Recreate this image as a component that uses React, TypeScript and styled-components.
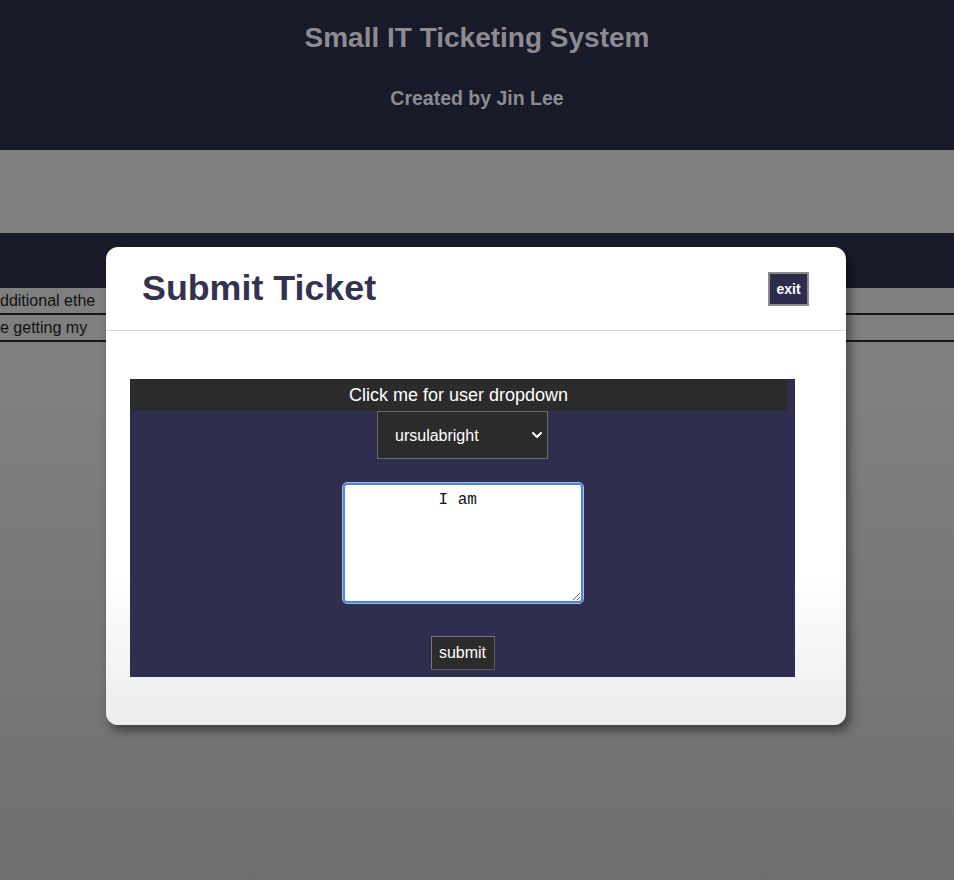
import React from "react";
import styled, { createGlobalStyle } from "styled-components";

const Global = createGlobalStyle`
  html, body { margin: 0; padding: 0; }
  body {
    font-family: "Liberation Sans", Arial, Helvetica, sans-serif;
    background: linear-gradient(to bottom, #818181 0px, #7e7e7e 420px, #6f6f6f 880px);
    min-height: 880px;
    overflow: hidden;
  }
`;

const Page = styled.div`
  position: relative;
  width: 954px;
  height: 880px;
  overflow: hidden;
`;

const Header = styled.header`
  height: 150px;
  background: #181a29;
  display: flex;
  flex-direction: column;
  align-items: center;
  padding-top: 22px;
  box-sizing: border-box;
  color: #8b8b91;
`;

const Title = styled.h1`
  margin: 0;
  font-size: 28px;
  line-height: 32px;
  font-weight: bold;
`;

const Subtitle = styled.h2`
  margin: 32px 0 0;
  font-size: 19.5px;
  line-height: 24px;
  font-weight: bold;
`;

const Spacer = styled.div`
  height: 83px;
`;

const NavBand = styled.div`
  height: 55px;
  background: #181a29;
`;

const Row = styled.div`
  height: 25px;
  border-bottom: 2px solid #161616;
  display: flex;
  align-items: center;
  font-size: 16px;
  color: #111;
  white-space: nowrap;
`;

const Cell = styled.div`
  width: 106px;
  overflow: hidden;
`;

const Modal = styled.div`
  position: absolute;
  top: 247px;
  left: 106px;
  width: 740px;
  height: 478px;
  border-radius: 12px;
  background: linear-gradient(to bottom, #ffffff 0%, #ffffff 68%, #ececec 100%);
  box-shadow: 4px 6px 10px rgba(0, 0, 0, 0.45);
  display: flex;
  flex-direction: column;
`;

const ModalHeader = styled.div`
  height: 84px;
  box-sizing: border-box;
  display: flex;
  align-items: center;
  justify-content: space-between;
  padding: 0 37px 0 36px;
  border-bottom: 1px solid #d8d8d8;
`;

const ModalTitle = styled.h2`
  margin: 0;
  font-size: 35.8px;
  font-weight: bold;
  color: #33324f;
`;

const ExitButton = styled.button`
  width: 41px;
  height: 34px;
  padding: 0;
  background: #2d2c4d;
  color: #fff;
  border: 2px solid #8a8a8a;
  font-family: "Liberation Sans", Arial, sans-serif;
  font-weight: bold;
  font-size: 14px;
  cursor: pointer;
`;

const ModalBody = styled.div`
  padding: 48px 51px 0 24px;
`;

const Form = styled.form`
  height: 298px;
  background: #2f2e4f;
  display: flex;
  flex-direction: column;
  align-items: center;
`;

const FormBar = styled.div`
  align-self: flex-start;
  width: 657px;
  height: 32px;
  background: #2b2b2c;
  color: #fff;
  font-size: 18px;
  display: flex;
  align-items: center;
  justify-content: center;
`;

const SelectWrap = styled.div`
  position: relative;
  width: 171px;
  height: 48px;
`;

const Select = styled.select`
  width: 100%;
  height: 100%;
  appearance: none;
  -webkit-appearance: none;
  background: #2b2b2b;
  color: #fff;
  border: 1px solid #6d6d6d;
  border-radius: 0;
  font-family: "Liberation Sans", Arial, sans-serif;
  font-size: 16px;
  padding: 0 0 0 17px;
  outline: none;
`;

const Chevron = styled.svg`
  position: absolute;
  right: 5px;
  top: 19px;
  pointer-events: none;
`;

const TextArea = styled.textarea`
  margin-top: 24px;
  width: 240px;
  height: 120px;
  box-sizing: border-box;
  border: 2px solid #4f86d8;
  border-radius: 4px;
  outline: 1px solid #9fbce8;
  background: #fff;
  font-family: "Liberation Mono", "Courier New", monospace;
  font-size: 16px;
  text-align: center;
  padding: 6px 2px 2px;
  color: #111;
`;

const SubmitButton = styled.button`
  margin-top: 33px;
  width: 64px;
  height: 34px;
  padding: 0;
  background: #2b2b2b;
  color: #fff;
  border: 1px solid #5c5c5c;
  border-top-color: #777;
  border-left-color: #777;
  font-family: "Liberation Sans", Arial, sans-serif;
  font-size: 16px;
  cursor: pointer;
`;

export default function App() {
  return (
    <Page>
      <Global />
      <Header>
        <Title>Small IT Ticketing System</Title>
        <Subtitle>Created by Jin Lee</Subtitle>
      </Header>
      <Spacer />
      <NavBand />
      <Row>
        <Cell>dditional ethe</Cell>
      </Row>
      <Row>
        <Cell>e getting my</Cell>
      </Row>

      <Modal>
        <ModalHeader>
          <ModalTitle>Submit Ticket</ModalTitle>
          <ExitButton type="button">exit</ExitButton>
        </ModalHeader>
        <ModalBody>
          <Form onSubmit={(e) => e.preventDefault()}>
            <FormBar>Click me for user dropdown</FormBar>
            <SelectWrap>
              <Select defaultValue="ursulabright">
                <option value="ursulabright">ursulabright</option>
              </Select>
              <Chevron width="12" height="10" viewBox="0 0 12 10">
                <path d="M2 3 L6 7 L10 3" fill="none" stroke="#fff" strokeWidth="2" strokeLinecap="round" strokeLinejoin="round" />
              </Chevron>
            </SelectWrap>
            <TextArea defaultValue="I am " />
            <SubmitButton type="submit">submit</SubmitButton>
          </Form>
        </ModalBody>
      </Modal>
    </Page>
  );
}
